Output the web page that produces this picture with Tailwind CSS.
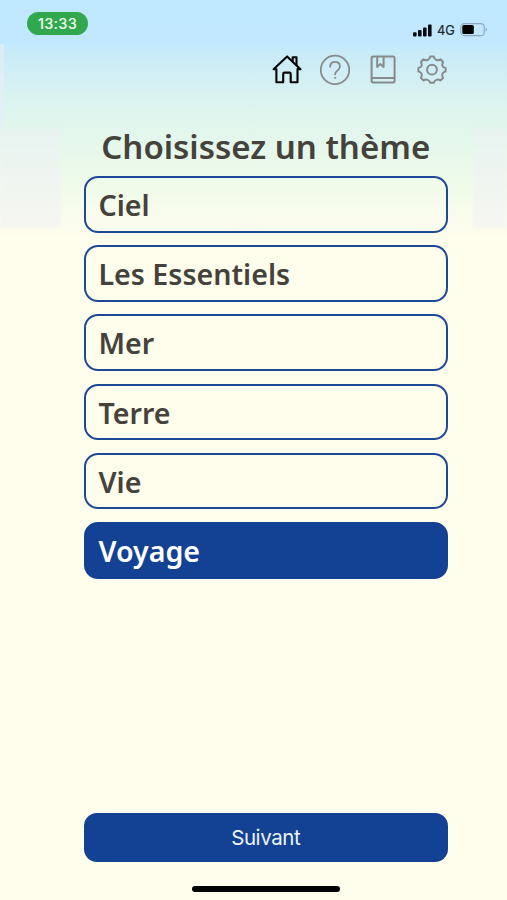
<!DOCTYPE html>
<html lang="fr">
<head>
<meta charset="utf-8">
<title>Choisissez un thème</title>
<script src="https://cdn.jsdelivr.net/npm/@tailwindcss/browser@4"></script>
</head>
<body class="bg-[#fffdec]">
<div class="relative isolate flex h-[900px] w-[507px] flex-col overflow-hidden bg-[linear-gradient(to_bottom,#bfe7ff_0px,#c1e8ff_42px,#c8ebf8_52px,#d4f0f3_82px,#def5ee_110px,#e6f8eb_150px,#f1fbea_190px,#fafced_218px,#fffdec_238px)] font-['Noto_Sans',sans-serif] text-[#45423c]">
  <!-- pale side panels of the sky -->
  <div class="absolute left-0 top-[128px] -z-10 h-[100px] w-[61px] bg-linear-to-b from-[#e7f3f0] to-[#f7f7f1] blur-[1px]"></div>
  <div class="absolute right-0 top-[128px] -z-10 h-[100px] w-[34px] bg-linear-to-b from-[#e7f3f0] to-[#f7f7f1] blur-[1px]"></div>
  <div class="absolute left-0 top-[44px] -z-10 h-[84px] w-1 bg-[#e2eff5]/70"></div>

  <header class="flex h-[46px] items-start justify-between pl-[27px] pr-[19px] pt-[12px]">
    <div class="flex h-[23px] w-[61px] items-center justify-center rounded-full bg-[#31a84d] font-['Inter'] text-[14.5px] font-medium tracking-[0.3px] text-[#effff0]">13:33</div>
    <div class="mt-[11px] flex h-[14px] items-center">
      <svg class="h-[13px] w-[19px]" viewBox="0 0 19 13"><g fill="#050b10"><rect x="0" y="8.2" width="3.6" height="4.3" rx="1"/><rect x="5" y="6" width="3.6" height="6.5" rx="1"/><rect x="10" y="3.4" width="3.6" height="9.1" rx="1"/><rect x="15" y=".6" width="3.6" height="11.9" rx="1"/></g></svg>
      <span class="ml-[5px] w-[19px] pt-[2px] font-['Inter'] text-[12.8px] leading-none text-[#1b2830] [-webkit-text-stroke:0.2px]">4G</span>
      <svg class="ml-[4px] h-[14px] w-[28px]" viewBox="0 0 28 14"><rect x=".8" y=".6" width="23.4" height="12" rx="3.4" fill="none" stroke="#8fa9b8" stroke-width="1.1"/><rect x="2.3" y="2.1" width="11.5" height="9" rx="1.5" fill="#000"/><path d="M25.6 4.6c1.7.6 1.7 3.4 0 4z" fill="#8fa9b8"/></svg>
    </div>
  </header>

  <nav class="flex h-[46px] items-center gap-[16px] pl-[271px]">
    <svg class="size-8" viewBox="0 0 32 32" fill="none" stroke="#050505" stroke-width="2.1" stroke-linejoin="round" stroke-linecap="round"><path d="M5.4 16v13.2h6.8v-8.3q0-1.3 1.3-1.3h4.9q1.3 0 1.3 1.3v8.3h6.8V16M2.6 16.2 16.1 3.4l13.4 12.8h-3M2.6 16.2h2.8"/><path d="M21.7 8V4.2h3.8v8"/></svg>
    <svg class="size-8" viewBox="0 0 32 32" fill="none" stroke="#858b8b" stroke-width="1.8" stroke-linecap="round"><circle cx="16" cy="16.9" r="14.2"/><path d="M11.2 13.7c0-3.1 2-4.8 4.8-4.8s4.9 1.7 4.9 4.5c0 2.4-1.3 3.4-2.8 4.5-1.4 1-2 1.7-2 3.5"/><circle cx="16" cy="24.8" r=".65" fill="#858b8b" stroke-width=".8"/></svg>
    <svg class="size-8" viewBox="0 0 32 32" fill="none" stroke="#858b8b" stroke-width="2" stroke-linejoin="round"><rect x="4.6" y="3.6" width="23" height="26" rx="1.8"/><path d="M4.6 25h23M10.2 3.6v10.3l3.2-2.8 3.2 2.8V3.6"/></svg>
    <svg class="ml-[1px] size-8" viewBox="0 0 32 32" fill="none" stroke="#858b8b" stroke-width="2" stroke-linejoin="round"><circle cx="16" cy="16.7" r="4.9"/><path d="M14.2 3.6h3.6q.6 2.7 2.6 3.4 1.8.7 4-.7l2.7 2.7q-1.4 2.2-.7 3.9.8 1.8 3.2 2.2v3.3q-2.4.6-3.2 2.4-.7 1.9.7 4.1l-2.7 2.6q-2.2-1.4-4-.6-2 .8-2.6 2.9h-3.6q-.6-2.1-2.6-2.9-1.8-.8-4 .6l-2.7-2.6q1.4-2.2.7-4.1-.8-1.8-3.2-2.4v-3.3q2.4-.4 3.2-2.2.7-1.7-.7-3.9l2.7-2.7q2.2 1.4 4 .7 2-.7 2.6-3.4z"/></svg>
  </nav>

  <main class="flex flex-1 flex-col pl-[83.5px] pr-[59px] pt-[32px]">
    <h1 class="h-[52px] whitespace-nowrap text-center text-[33px] font-semibold leading-[45px]">Choisissez un thème</h1>
    <ul class="flex flex-col gap-[12.6px] text-[28.6px] font-semibold leading-none">
      <li class="flex h-[56.6px] items-center rounded-[14px] border-2 border-[#1d4997] pl-[13px] pt-[2px]">Ciel</li>
      <li class="flex h-[56.6px] items-center rounded-[14px] border-2 border-[#1d4997] pl-[13px] pt-[2px]">Les Essentiels</li>
      <li class="flex h-[56.6px] items-center rounded-[14px] border-2 border-[#1d4997] pl-[13px] pt-[2px]">Mer</li>
      <li class="flex h-[56.6px] items-center rounded-[14px] border-2 border-[#1d4997] pl-[13px] pt-[2px]">Terre</li>
      <li class="flex h-[56.6px] items-center rounded-[14px] border-2 border-[#1d4997] pl-[13px] pt-[2px]">Vie</li>
      <li class="flex h-[56.6px] items-center rounded-[14px] border-2 border-[#134294] bg-[#134294] pl-[13px] pt-[2px] text-white">Voyage</li>
    </ul>
    <button class="mb-[38px] mt-auto h-[49px] shrink-0 rounded-[13px] bg-[#134294] pt-px font-['Inter'] text-[20.5px] font-normal tracking-[-0.4px] text-[#edf4ff]">Suivant</button>
  </main>
  <div class="absolute bottom-[8px] left-[192px] h-[6px] w-[148px] rounded-full bg-black"></div>
</div>
</body>
</html>
